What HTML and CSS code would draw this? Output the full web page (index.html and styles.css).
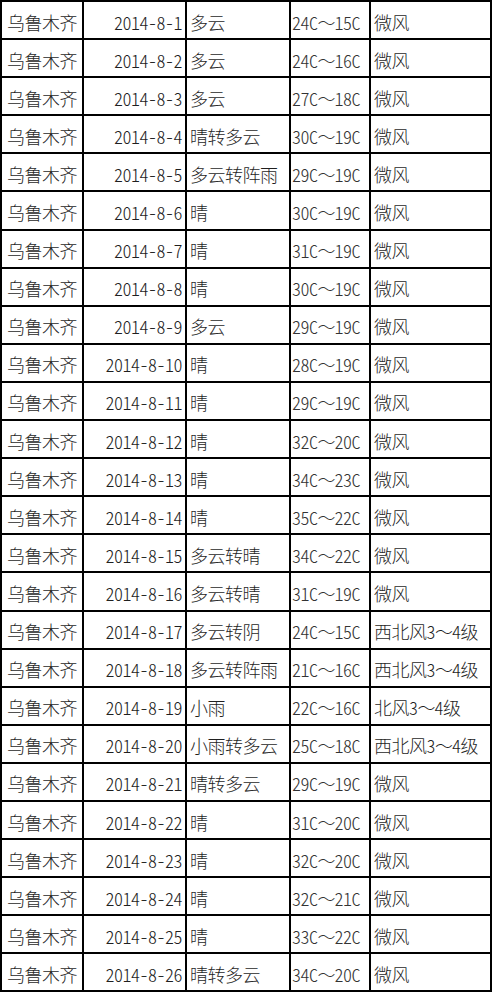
FILE: index.html
```html
<!DOCTYPE html>
<html lang="zh-CN">
<head>
<meta charset="utf-8">
<title>乌鲁木齐 2014年8月天气</title>
<link rel="stylesheet" href="styles.css">
</head>
<body>
<table class="weather">
<colgroup>
<col class="c-city"><col class="c-date"><col class="c-sky"><col class="c-temp"><col class="c-wind">
</colgroup>
<tbody>
<tr><td class="city">乌鲁木齐</td><td class="date">2014-8-1</td><td class="sky">多云</td><td class="temp">24C<span class="wave">～</span>15C</td><td class="wind">微风</td></tr>
<tr><td class="city">乌鲁木齐</td><td class="date">2014-8-2</td><td class="sky">多云</td><td class="temp">24C<span class="wave">～</span>16C</td><td class="wind">微风</td></tr>
<tr><td class="city">乌鲁木齐</td><td class="date">2014-8-3</td><td class="sky">多云</td><td class="temp">27C<span class="wave">～</span>18C</td><td class="wind">微风</td></tr>
<tr><td class="city">乌鲁木齐</td><td class="date">2014-8-4</td><td class="sky">晴转多云</td><td class="temp">30C<span class="wave">～</span>19C</td><td class="wind">微风</td></tr>
<tr><td class="city">乌鲁木齐</td><td class="date">2014-8-5</td><td class="sky">多云转阵雨</td><td class="temp">29C<span class="wave">～</span>19C</td><td class="wind">微风</td></tr>
<tr><td class="city">乌鲁木齐</td><td class="date">2014-8-6</td><td class="sky">晴</td><td class="temp">30C<span class="wave">～</span>19C</td><td class="wind">微风</td></tr>
<tr><td class="city">乌鲁木齐</td><td class="date">2014-8-7</td><td class="sky">晴</td><td class="temp">31C<span class="wave">～</span>19C</td><td class="wind">微风</td></tr>
<tr><td class="city">乌鲁木齐</td><td class="date">2014-8-8</td><td class="sky">晴</td><td class="temp">30C<span class="wave">～</span>19C</td><td class="wind">微风</td></tr>
<tr><td class="city">乌鲁木齐</td><td class="date">2014-8-9</td><td class="sky">多云</td><td class="temp">29C<span class="wave">～</span>19C</td><td class="wind">微风</td></tr>
<tr><td class="city">乌鲁木齐</td><td class="date">2014-8-10</td><td class="sky">晴</td><td class="temp">28C<span class="wave">～</span>19C</td><td class="wind">微风</td></tr>
<tr><td class="city">乌鲁木齐</td><td class="date">2014-8-11</td><td class="sky">晴</td><td class="temp">29C<span class="wave">～</span>19C</td><td class="wind">微风</td></tr>
<tr><td class="city">乌鲁木齐</td><td class="date">2014-8-12</td><td class="sky">晴</td><td class="temp">32C<span class="wave">～</span>20C</td><td class="wind">微风</td></tr>
<tr><td class="city">乌鲁木齐</td><td class="date">2014-8-13</td><td class="sky">晴</td><td class="temp">34C<span class="wave">～</span>23C</td><td class="wind">微风</td></tr>
<tr><td class="city">乌鲁木齐</td><td class="date">2014-8-14</td><td class="sky">晴</td><td class="temp">35C<span class="wave">～</span>22C</td><td class="wind">微风</td></tr>
<tr><td class="city">乌鲁木齐</td><td class="date">2014-8-15</td><td class="sky">多云转晴</td><td class="temp">34C<span class="wave">～</span>22C</td><td class="wind">微风</td></tr>
<tr><td class="city">乌鲁木齐</td><td class="date">2014-8-16</td><td class="sky">多云转晴</td><td class="temp">31C<span class="wave">～</span>19C</td><td class="wind">微风</td></tr>
<tr><td class="city">乌鲁木齐</td><td class="date">2014-8-17</td><td class="sky">多云转阴</td><td class="temp">24C<span class="wave">～</span>15C</td><td class="wind">西北风3<span class="wave">～</span>4级</td></tr>
<tr><td class="city">乌鲁木齐</td><td class="date">2014-8-18</td><td class="sky">多云转阵雨</td><td class="temp">21C<span class="wave">～</span>16C</td><td class="wind">西北风3<span class="wave">～</span>4级</td></tr>
<tr><td class="city">乌鲁木齐</td><td class="date">2014-8-19</td><td class="sky">小雨</td><td class="temp">22C<span class="wave">～</span>16C</td><td class="wind">北风3<span class="wave">～</span>4级</td></tr>
<tr><td class="city">乌鲁木齐</td><td class="date">2014-8-20</td><td class="sky">小雨转多云</td><td class="temp">25C<span class="wave">～</span>18C</td><td class="wind">西北风3<span class="wave">～</span>4级</td></tr>
<tr><td class="city">乌鲁木齐</td><td class="date">2014-8-21</td><td class="sky">晴转多云</td><td class="temp">29C<span class="wave">～</span>19C</td><td class="wind">微风</td></tr>
<tr><td class="city">乌鲁木齐</td><td class="date">2014-8-22</td><td class="sky">晴</td><td class="temp">31C<span class="wave">～</span>20C</td><td class="wind">微风</td></tr>
<tr><td class="city">乌鲁木齐</td><td class="date">2014-8-23</td><td class="sky">晴</td><td class="temp">32C<span class="wave">～</span>20C</td><td class="wind">微风</td></tr>
<tr><td class="city">乌鲁木齐</td><td class="date">2014-8-24</td><td class="sky">晴</td><td class="temp">32C<span class="wave">～</span>21C</td><td class="wind">微风</td></tr>
<tr><td class="city">乌鲁木齐</td><td class="date">2014-8-25</td><td class="sky">晴</td><td class="temp">33C<span class="wave">～</span>22C</td><td class="wind">微风</td></tr>
<tr><td class="city">乌鲁木齐</td><td class="date">2014-8-26</td><td class="sky">晴转多云</td><td class="temp">34C<span class="wave">～</span>20C</td><td class="wind">微风</td></tr>
</tbody>
</table>
</body>
</html>
```

FILE: styles.css
```css
html, body {
  margin: 0;
  padding: 0;
  background: #fff;
}

.weather {
  table-layout: fixed;
  width: 492px;
  border-collapse: separate;
  border-spacing: 2px;
  background: #000;
  font-family: "Noto Sans CJK SC", sans-serif;
  font-size: 18px;
  font-weight: 300;
  font-feature-settings: "hwid" 1;
  letter-spacing: -0.5px;
  color: #1f1f1f;
}

.c-city { width: 80px; }
.c-date { width: 101px; }
.c-sky  { width: 102px; }
.c-temp { width: 78px; }
.c-wind { width: 119px; }

.weather td {
  background: #fff;
  height: 33.1px;
  padding: 3px 0 0 0;
  vertical-align: middle;
  white-space: nowrap;
  overflow: hidden;
  line-height: 20px;
}

.weather td.city { padding-left: 5px; }
.weather td.date { text-align: right; padding-right: 3px; }
.weather td.sky  { padding-left: 3px; }
.weather td.temp { padding-left: 1px; color: #333; }
.weather td.wind { padding-left: 3px; }

.wave {
  font-feature-settings: normal;
  letter-spacing: -1px;
}
```
